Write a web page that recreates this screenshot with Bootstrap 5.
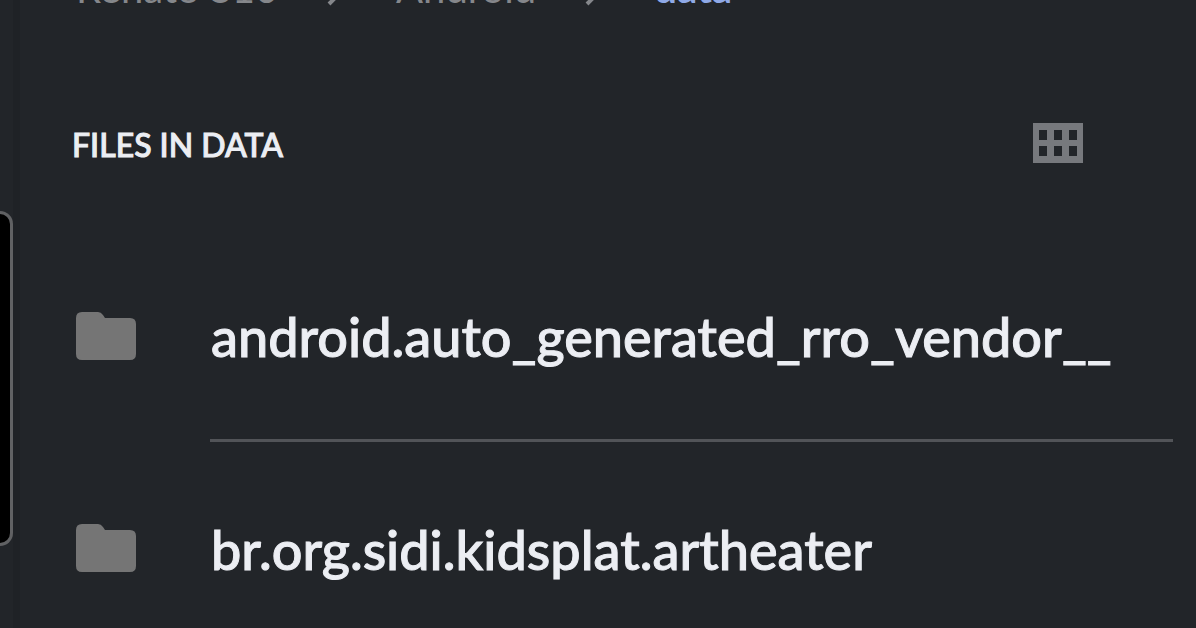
<!DOCTYPE html>
<html lang="en">
<head>
<meta charset="utf-8">
<meta name="viewport" content="width=device-width, initial-scale=1">
<title>Files in data</title>
<link href="https://cdn.jsdelivr.net/npm/bootstrap@5.3.0/dist/css/bootstrap.min.css" rel="stylesheet">
<style>
  body { background: #222529; color: #eceef3; font-family: Lato, "Noto Sans", sans-serif; }
  .edge { width: 13px; padding-top: 211px; }
  .edge-panel { height: 335px; background: #000; border: 3px solid #606163; border-left: 0; border-radius: 0 14px 14px 0; }
  .seam { width: 7px; background: #1f2226; }
  .pane { min-width: 0; }
  .path-bar { height: 6px; padding-left: 56px; font-size: 40px; line-height: 36px; }
  .path-bar a { color: #85878b; }
  .path-bar .current { color: #8fa9e6; font-weight: 700; }
  .path-bar svg { margin: 0 54px 0 48px; }
  .section-bar { height: 66px; margin-top: 104px; padding: 0 112px 0 52px; }
  .section-name { padding-top: 4px; font-size: 32px; line-height: 40px; font-weight: 500; -webkit-text-stroke: 1px currentColor; }
  .view-toggle { color: #77797d; }
  .files { margin-top: 54px; }
  .file-row { color: inherit; }
  .file-icon { width: 60px; margin: 0 74px 0 56px; color: #757575; }
  .file-name { height: 212px; margin-right: 23px; padding: 4px 0 0 1px; font-size: 54px; line-height: 64px; font-weight: 500; -webkit-text-stroke: 1px currentColor; }
  .file-row:not(:last-child) .file-name { border-bottom: 3px solid #525458; }
</style>
</head>
<body class="overflow-hidden">
<div class="d-flex min-vh-100">
  <aside class="edge flex-shrink-0"><div class="edge-panel"></div></aside>
  <div class="seam flex-shrink-0"></div>
  <main class="pane flex-grow-1">
    <nav class="path-bar d-flex align-items-end overflow-hidden text-nowrap" aria-label="Path">
      <a class="text-decoration-none" href="#">Renato S10</a>
      <svg width="16" height="24" viewBox="0 0 16 24" fill="none" stroke="#85878b" stroke-width="4" aria-hidden="true"><path d="M3 2l10 10L3 22"/></svg>
      <a class="text-decoration-none" href="#">Android</a>
      <svg width="16" height="24" viewBox="0 0 16 24" fill="none" stroke="#85878b" stroke-width="4" aria-hidden="true"><path d="M3 2l10 10L3 22"/></svg>
      <a class="current text-decoration-none" href="#" aria-current="page">data</a>
    </nav>
    <header class="section-bar d-flex align-items-center justify-content-between">
      <h1 class="section-name m-0">FILES IN DATA</h1>
      <button class="view-toggle btn border-0 p-0 d-flex" type="button" aria-label="Grid view">
        <svg width="52" height="40" viewBox="0 0 52 40" aria-hidden="true"><path fill="currentColor" fill-rule="evenodd" d="M1 0H51V40H1ZM7 7V17H15V7ZM22 7V17H30V7ZM37 7V17H45V7ZM7 23V33H15V23ZM22 23V33H30V23ZM37 23V33H45V23Z"/></svg>
      </button>
    </header>
    <div class="files">
      <a class="file-row d-flex align-items-center text-decoration-none" href="#">
        <svg class="file-icon flex-shrink-0" height="48" viewBox="0 0 60 48" aria-hidden="true"><path fill="currentColor" d="M6 0H22Q25 0 27 3L29 6H54Q60 6 60 12V42Q60 48 54 48H6Q0 48 0 42V6Q0 0 6 0Z"/></svg>
        <span class="file-name d-flex align-items-center flex-grow-1">android.auto_generated_rro_vendor__</span>
      </a>
      <a class="file-row d-flex align-items-center text-decoration-none" href="#">
        <svg class="file-icon flex-shrink-0" height="48" viewBox="0 0 60 48" aria-hidden="true"><path fill="currentColor" d="M6 0H22Q25 0 27 3L29 6H54Q60 6 60 12V42Q60 48 54 48H6Q0 48 0 42V6Q0 0 6 0Z"/></svg>
        <span class="file-name d-flex align-items-center flex-grow-1">br.org.sidi.kidsplat.artheater</span>
      </a>
    </div>
  </main>
</div>
<script src="https://cdn.jsdelivr.net/npm/bootstrap@5.3.0/dist/js/bootstrap.bundle.min.js"></script>
</body>
</html>
